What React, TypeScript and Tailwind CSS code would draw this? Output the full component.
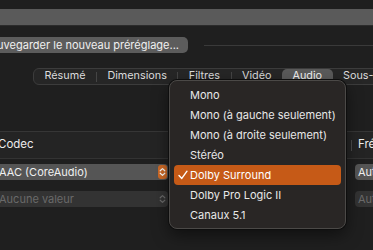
import React from "react";

const tabs = ["Résumé", "Dimensions", "Filtres", "Vidéo", "Audio", "Sous-titres", "Chapitres"];
const items = [
  "Mono",
  "Mono (à gauche seulement)",
  "Mono (à droite seulement)",
  "Stéréo",
  "Dolby Surround",
  "Dolby Pro Logic II",
  "Canaux 5.1",
];

function Stepper({ active }: { active: boolean }) {
  return (
    <div
      className={
        "w-[9px] h-[14px] rounded-[3px] flex items-center justify-center " +
        (active ? "bg-[#cf6a26]" : "")
      }
    >
      <svg width="7" height="10" viewBox="0 0 7 10" fill="none">
        <path
          d="M1.2 3.8 L3.5 1.6 L5.8 3.8 M1.2 6.2 L3.5 8.4 L5.8 6.2"
          stroke={active ? "#ffffff" : "#6a6a6a"}
          strokeWidth="1.2"
          strokeLinecap="round"
          strokeLinejoin="round"
        />
      </svg>
    </div>
  );
}

export default function App() {
  return (
    <div className="relative w-[373px] h-[250px] overflow-hidden bg-[#1f1f1f] text-[#e4e4e4] font-['Inter','Liberation_Sans',sans-serif]">
      <div className="h-[9px]" />
      <div className="h-[16px] bg-[#5a5a5a] border-b border-[#2b2b2b] box-content" />
      <div className="mt-[11px] h-[16px] flex items-center">
        <div className="w-[188px] h-[16px] shrink-0 bg-[#5c5c5c] rounded-r-[5px] overflow-hidden flex items-center justify-end pr-[9px]">
          <span className="whitespace-nowrap text-[11px] leading-none text-[#f0f0f0]">
            Sauvegarder le nouveau préréglage...
          </span>
        </div>
        <div className="ml-[16px] flex-1 h-px bg-[#3a3a3a]" />
      </div>
      <div className="mt-[15px] ml-[33px] h-[17px] flex items-center rounded-[6px] border border-[#3c3c3c] bg-[#262626] w-max">
        {tabs.map((t, i) => (
          <React.Fragment key={t}>
            {i > 0 && t !== "Audio" && tabs[i - 1] !== "Audio" && (
              <div className="w-px h-[10px] bg-[#444]" />
            )}
            <div
              className={
                "h-[15px] flex items-center whitespace-nowrap text-[10.8px] leading-none " +
                (t === "Audio"
                  ? "bg-[#5a5a5a] rounded-[5px] px-[10.5px] text-[#f2f2f2]"
                  : "px-[10.5px] text-[#dcdcdc]")
              }
            >
              {t}
            </div>
          </React.Fragment>
        ))}
      </div>
      <div className="mt-[46px] border-t border-[#363636]">
        <div className="grid grid-cols-[347px_1fr]">
          <div className="border-r border-[#141414]">
            <div className="h-[27px] bg-[#242424] border-b border-[#333] flex items-center">
              <span className="ml-[-2px] text-[11.5px] text-[#ececec]">Codec</span>
            </div>
            <div className="pt-[5px] flex flex-col gap-[11px]">
              <div className="w-[168px] h-[16px] rounded-r-[4px] bg-[#555555] flex items-center justify-between pr-[1px]">
                <span className="ml-[-1px] text-[11px] leading-none text-[#f0f0f0]">AAC (CoreAudio)</span>
                <Stepper active />
              </div>
              <div className="w-[168px] h-[16px] rounded-r-[4px] bg-[#333333] flex items-center justify-between pr-[1px]">
                <span className="ml-[-1px] text-[11px] leading-none text-[#6a6a6a]">Aucune valeur</span>
                <Stepper active={false} />
              </div>
            </div>
          </div>
          <div>
            <div className="h-[27px] bg-[#242424] border-b border-[#333] flex items-center">
              <div className="ml-[4px] w-px h-[11px] bg-[#4a4a4a]" />
              <span className="ml-[6px] text-[11.5px] text-[#ececec] whitespace-nowrap">Fréquence</span>
            </div>
            <div className="pt-[5px] flex flex-col gap-[11px] pl-[8px]">
              <div className="w-[40px] h-[16px] rounded-[4px] bg-[#555555] flex items-center pl-[3px]">
                <span className="text-[11px] leading-none text-[#f0f0f0]">Auto</span>
              </div>
              <div className="w-[40px] h-[16px] rounded-[4px] bg-[#333333] flex items-center pl-[3px]">
                <span className="text-[11px] leading-none text-[#6a6a6a]">Auto</span>
              </div>
            </div>
          </div>
        </div>
      </div>

      <div className="absolute left-[169px] top-[80px] w-[177px] h-[149px] rounded-[8px] bg-[#292625] border border-[#4b4947] shadow-[0_0_0_1px_#0e0e0e,0_6px_16px_rgba(0,0,0,0.5)] px-[4px] pt-[4px]">
        {items.map((it) => {
          const sel = it === "Dolby Surround";
          return (
            <div
              key={it}
              className={
                "relative h-[20px] flex items-center pl-[16px] text-[11px] leading-none whitespace-nowrap " +
                (sel ? "bg-[#c65a17] rounded-[4px] text-white" : "text-[#e8e8e8]")
              }
            >
              {sel && (
                <svg className="absolute left-[4px] top-[5px]" width="10" height="10" viewBox="0 0 10 10" fill="none">
                  <path d="M1 5.4 L3.8 8.4 L9 1.2" stroke="#ffffff" strokeWidth="1.4" strokeLinecap="round" strokeLinejoin="round" />
                </svg>
              )}
              {it}
            </div>
          );
        })}
      </div>
    </div>
  );
}
